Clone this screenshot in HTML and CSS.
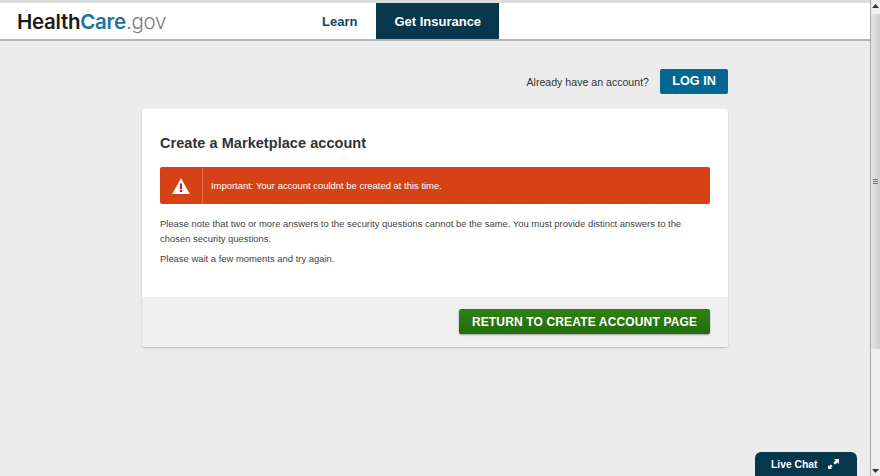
FILE: index.html
```html
<!DOCTYPE html>
<html lang="en">
<head>
<meta charset="utf-8">
<title>Create a Marketplace account</title>
<link rel="stylesheet" href="styles.css">
</head>
<body>
<div class="viewport">
  <div class="page">
    <header class="header">
      <a class="logo"><span class="logo-health">Health</span><span class="logo-care">Care</span><span class="logo-gov">.gov</span></a>
      <nav class="nav">
        <a class="nav-item">Learn</a>
        <a class="nav-item nav-active">Get Insurance</a>
      </nav>
    </header>
    <main class="main">
      <div class="login-row">
        <span class="login-text">Already have an account?</span>
        <a class="login-btn">LOG IN</a>
      </div>
      <section class="card">
        <div class="card-body">
          <h1 class="title">Create a Marketplace account</h1>
          <div class="alert">
            <div class="alert-icon">
              <svg width="18" height="16" viewBox="0 0 18 16"><path d="M9 0.3 L17.8 16 H0.2 Z" fill="#fff"/><rect x="8" y="5.5" width="2" height="5.5" fill="#c8102e"/><rect x="8" y="12" width="2" height="2" fill="#c8102e"/></svg>
            </div>
            <div class="alert-text">Important: Your account couldnt be created at this time.</div>
          </div>
          <p class="copy">Please note that two or more answers to the security questions cannot be the same. You must provide distinct answers to the chosen security questions.</p>
          <p class="copy">Please wait a few moments and try again.</p>
        </div>
        <div class="card-foot">
          <a class="return-btn">RETURN TO CREATE ACCOUNT PAGE</a>
        </div>
      </section>
    </main>
  </div>
  <div class="scrollbar">
    <div class="scroll-arrow"><svg width="7" height="4" viewBox="0 0 7 4"><path d="M3.5 0 L7 4 H0 Z" fill="#333"/></svg></div>
    <div class="scroll-thumb"><span class="grip"></span></div>
    <div class="scroll-track"></div>
    <div class="scroll-arrow"><svg width="7" height="4" viewBox="0 0 7 4"><path d="M0 0 H7 L3.5 4 Z" fill="#333"/></svg></div>
  </div>
  <div class="chat">
    <span>Live Chat</span>
    <svg width="11" height="10" viewBox="0 0 11 10"><path d="M6 0 H11 V5 L9.4 3.4 L7 5.6 L5.4 4 L7.6 1.6 Z M0 10 V6 L1.2 7.2 L3 5.6 L4.6 7.2 L2.8 8.8 L4 10 Z" fill="#fff"/></svg>
  </div>
</div>
</body>
</html>
```

FILE: styles.css
```css
* { box-sizing: border-box; }
html, body { margin: 0; padding: 0; height: 100%; overflow: hidden; }
body { font-family: "Liberation Sans", Arial, sans-serif; color: #333; }

.viewport { position: relative; display: flex; width: 880px; height: 476px; background: #ececec; }
.page { flex: 1; min-width: 0; display: flex; flex-direction: column; }

.header {
  margin-top: 3px;
  height: 38px;
  flex: none;
  display: flex;
  background: #fff;
  border-bottom: 2px solid #b4b4b4;
  padding-left: 17px;
}
body::before { content: ""; position: absolute; z-index: 2; top: 0; left: 0; width: 880px; height: 3px; background: #dcdcdc; }
.logo { width: 287px; font-family: Inter, sans-serif; font-size: 20.5px; letter-spacing: -0.27px; line-height: 37px; white-space: nowrap; }
.logo-health { color: #1a1a1a; font-weight: 600; }
.logo-care { color: #1b75a0; font-weight: 600; }
.logo-gov { color: #7d7d7d; font-weight: 300; }
.nav { display: flex; height: 36px; }
.nav-item { font-size: 13px; font-weight: 700; line-height: 37px; color: #0f4a63; padding: 0 18px; white-space: nowrap; }
.nav-active { background: #06374c; color: #fff; width: 123px; padding-right: 0; margin-left: 1px; }

.main { flex: 1; display: flex; flex-direction: column; align-items: flex-end; padding: 28px 142px 0 0; }
.login-row { display: flex; align-items: center; height: 25px; gap: 11px; }
.login-text { font-size: 10.6px; color: #333; }
.login-btn { width: 68px; height: 25px; background: #046791; border-radius: 2px; color: #fff; font-weight: 700; font-size: 12.7px; line-height: 25px; text-align: center; }

.card { margin-top: 15px; width: 586px; height: 238px; background: #fff; border-radius: 3px; box-shadow: 0 1px 2px rgba(0,0,0,.22); display: flex; flex-direction: column; overflow: hidden; }
.card-body { flex: 1; padding: 26px 18px 0 18px; }
.title { margin: 0; font-size: 14.5px; line-height: 17px; font-weight: 700; color: #333; letter-spacing: 0.05px; }
.alert { margin-top: 15px; height: 37px; background: #d64215; border-radius: 2px; display: flex; align-items: center; color: #fff; }
.alert-icon { width: 43px; height: 37px; flex: none; display: flex; align-items: center; justify-content: center; border-right: 1px solid #e2704c; }
.alert-text { padding-left: 8px; font-size: 9.45px; }
.copy { margin: 0; font-size: 9.43px; line-height: 15px; color: #444; }
.alert + .copy { margin-top: 12px; }
.copy + .copy { margin-top: 5px; }
.card-foot { height: 50px; flex: none; background: #f0f0f0; display: flex; justify-content: flex-end; padding: 12px 18px 0 0; }
.return-btn { width: 251px; height: 25px; background: linear-gradient(#2f8114, #226d0c); border-radius: 2px; box-shadow: 0 1px 2px rgba(0,0,0,.35); color: #fff; font-weight: 700; font-size: 12px; line-height: 26px; text-align: center; letter-spacing: 0.15px; white-space: nowrap; }

.scrollbar { width: 10px; flex: none; display: flex; flex-direction: column; background: #f0f0f0; border-left: 1px solid #a8a8a8; position: relative; z-index: 3; }
.scroll-arrow { height: 11px; flex: none; display: flex; align-items: center; justify-content: center; background: #ededed; }
.scroll-thumb { height: 335px; flex: none; margin-top: 3px; background: linear-gradient(90deg, #e4e4e4, #cfcfcf); display: flex; align-items: center; justify-content: center; }
.grip { width: 5px; height: 5px; background: repeating-linear-gradient(#777 0 1px, transparent 1px 2px); }
.scroll-track { flex: 1; }

.chat { position: absolute; right: 23px; bottom: 0; width: 102px; height: 24px; background: #06374c; border-radius: 6px 6px 0 0; color: #fff; font-size: 10.3px; font-weight: 700; display: flex; align-items: center; gap: 11px; padding-left: 16px; }
```
